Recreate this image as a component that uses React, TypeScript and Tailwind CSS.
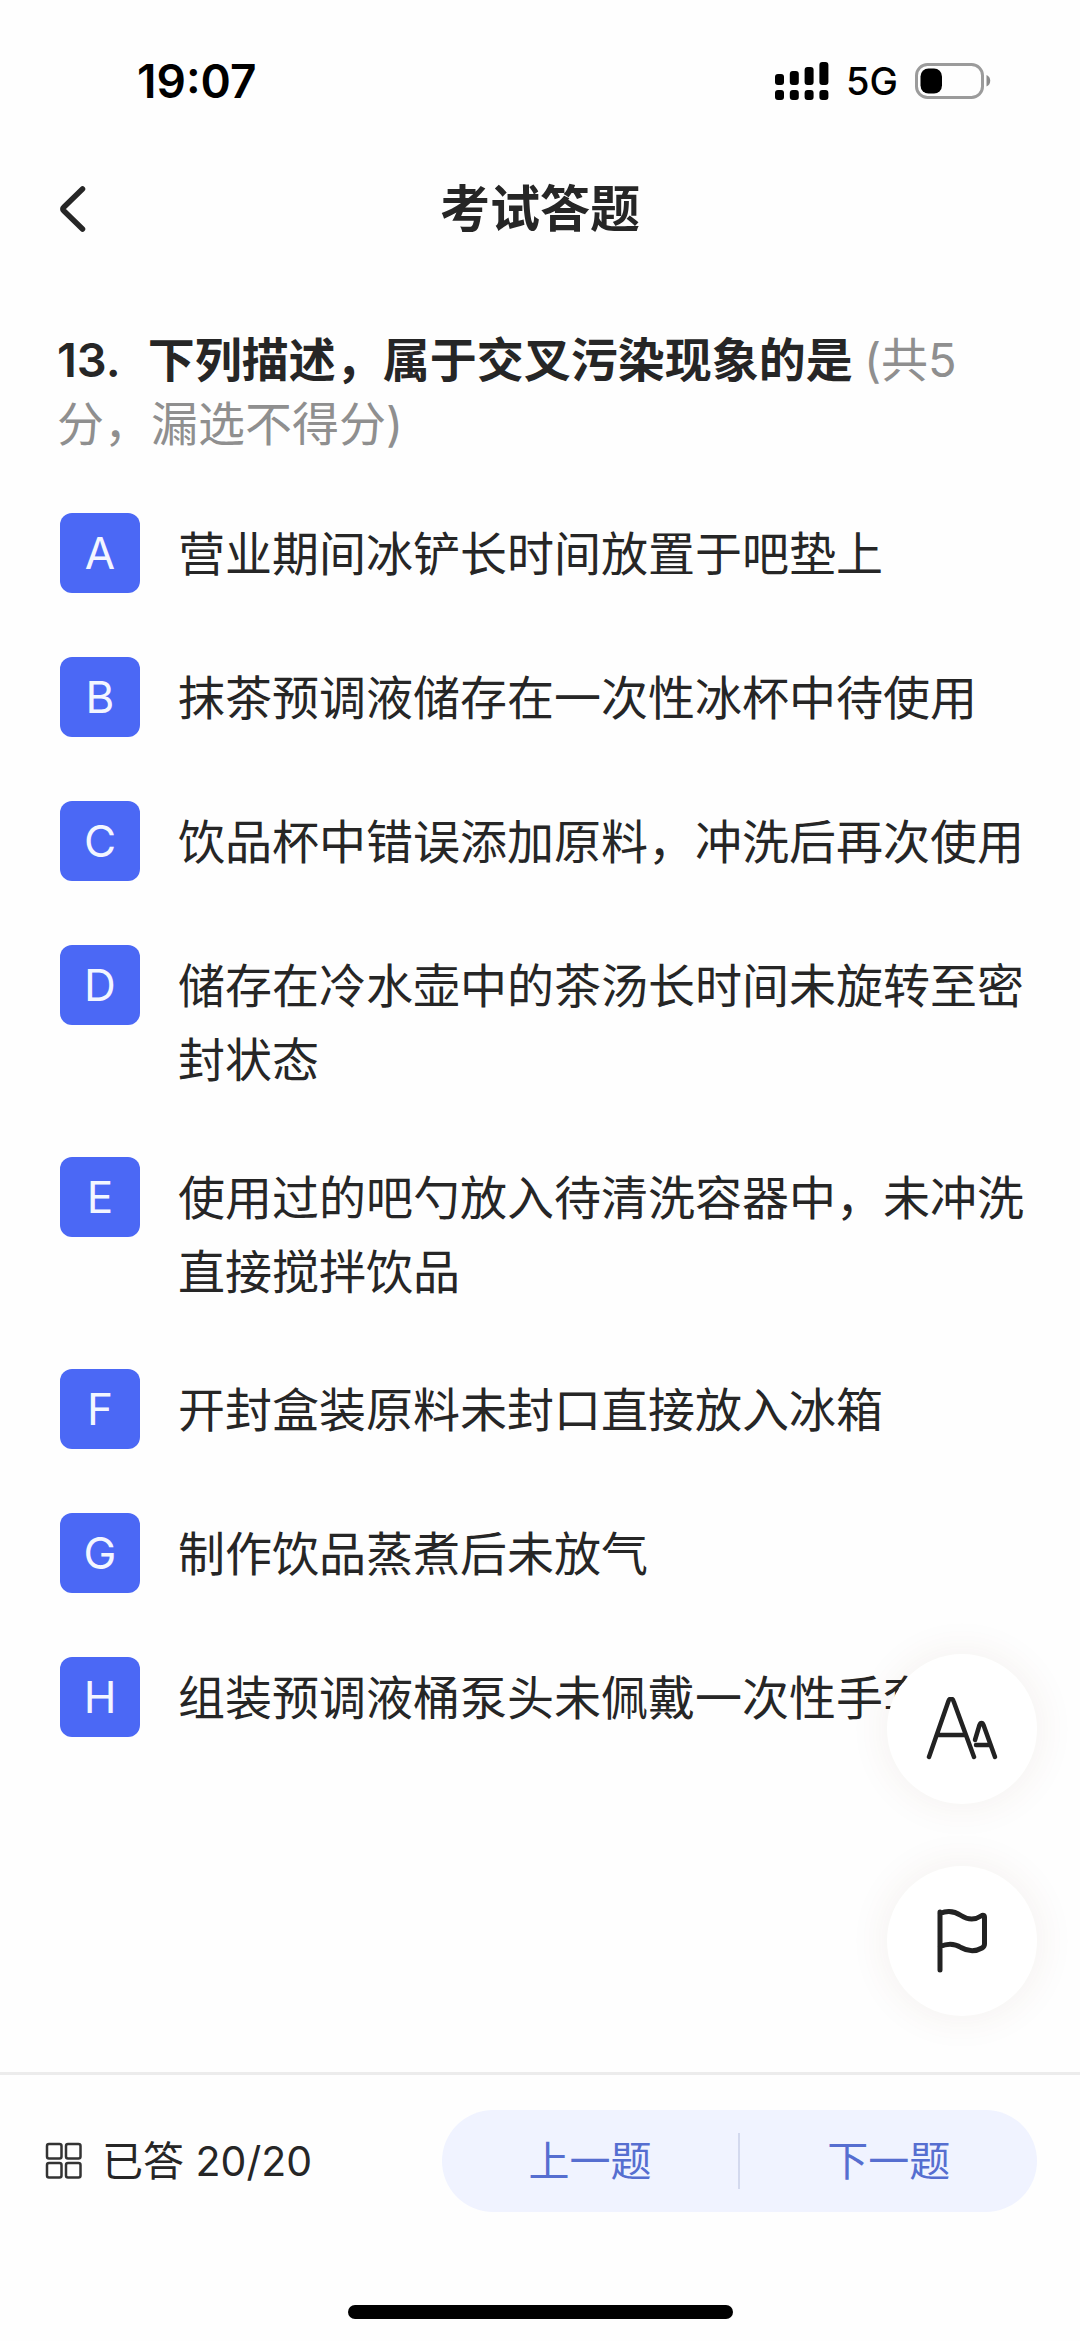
import { useState } from "react";

const options = [
  { key: "A", text: "营业期间冰铲长时间放置于吧垫上" },
  { key: "B", text: "抹茶预调液储存在一次性冰杯中待使用" },
  { key: "C", text: "饮品杯中错误添加原料，冲洗后再次使用" },
  { key: "D", text: "储存在冷水壶中的茶汤长时间未旋转至密封状态" },
  { key: "E", text: "使用过的吧勺放入待清洗容器中，未冲洗直接搅拌饮品" },
  { key: "F", text: "开封盒装原料未封口直接放入冰箱" },
  { key: "G", text: "制作饮品蒸煮后未放气" },
  { key: "H", text: "组装预调液桶泵头未佩戴一次性手套" },
];

function SignalIcon() {
  const heights = [11, 14, 18, 23];
  return (
    <svg width="54" height="38" viewBox="0 0 54 38" aria-hidden="true">
      {heights.map((h, i) => (
        <g key={i}>
          <rect x={i * 14.8} y={23 - h} width="9" height={h} rx="3" />
          <rect x={i * 14.8} y="28" width="9" height="10" rx="3" />
        </g>
      ))}
    </svg>
  );
}

function BatteryIcon() {
  return (
    <svg width="76" height="36" viewBox="0 0 76 36" aria-hidden="true">
      <rect x="1.5" y="1.5" width="66" height="33" rx="11" fill="none" stroke="#9b9b9b" strokeWidth="3" />
      <rect x="5.5" y="5.5" width="21.500" height="25" rx="8" />
      <path d="M71.5 12c5 2 5 9.500 0 11.500z" fill="#8c8c8c" />
    </svg>
  );
}

function StatusBar() {
  return (
    <div className="flex h-[162px] items-center justify-between pr-[89px] pl-[137px] text-black">
      <span className="text-[46px] leading-none font-semibold">19:07</span>
      <div className="flex items-center">
        <SignalIcon />
        <span className="ml-[17px] text-[38px] leading-none font-medium">5G</span>
        <span className="ml-[17px]">
          <BatteryIcon />
        </span>
      </div>
    </div>
  );
}

function Header() {
  return (
    <header className="grid h-[94px] grid-cols-[1fr_auto_1fr] items-center px-[57px]">
      <button type="button" aria-label="返回" className="flex justify-self-start">
        <svg width="30" height="48" viewBox="0 0 30 48" fill="none" stroke="#262626" strokeWidth="5.500" strokeLinecap="round" strokeLinejoin="round" aria-hidden="true">
          <path d="M25.500 4 6.500 22.500a2 2 0 0 0 0 3L25.500 44" />
        </svg>
      </button>
      <h1 className="text-[50px] leading-none font-bold">考试答题</h1>
    </header>
  );
}

function Options() {
  const [checked, setChecked] = useState(options.map(() => true));
  return (
    <ul className="mt-[57px] flex flex-col gap-[60px] pr-12 pl-[60px]">
      {options.map((o, i) => (
        <li key={o.key}>
          <label className="flex min-h-[84px] items-start gap-[38px]">
            <input
              type="checkbox"
              className="peer sr-only"
              checked={checked[i]}
              onChange={() => setChecked(checked.map((c, j) => (j === i ? !c : c)))}
            />
            <span className="flex size-20 shrink-0 items-center justify-center rounded-xl bg-[#a9b6f5] text-[44px] leading-none text-[#f3f6ff] peer-checked:bg-[#4b68f5]">
              {o.key}
            </span>
            <span className="flex-1 pt-1 text-[47px] leading-[74px]">{o.text}</span>
          </label>
        </li>
      ))}
    </ul>
  );
}

function FloatingActions() {
  return (
    <div className="absolute right-[43px] bottom-14 flex flex-col gap-[62px]">
      <button type="button" aria-label="字体大小" className="flex size-[150px] items-center justify-center rounded-full bg-white shadow-[0_0_40px_rgba(110,60,40,0.08)]">
        <svg width="72" height="64" viewBox="0 0 72 64" fill="none" stroke="#222" strokeWidth="4.500" strokeLinecap="round" strokeLinejoin="round" aria-hidden="true">
          <path d="M3 60 22.500 4c1-3 4-3 5 0L48 60M12 38h28" />
          <path d="m49 43 4.500-15c1-2.600 3-2.600 4 0L69 60M50 48h14" />
        </svg>
      </button>
      <button type="button" aria-label="标记" className="flex size-[150px] items-center justify-center rounded-full bg-white shadow-[0_0_40px_rgba(110,60,40,0.08)]">
        <svg width="54" height="66" viewBox="0 0 54 66" fill="none" stroke="#222" strokeWidth="5" strokeLinecap="round" strokeLinejoin="round" aria-hidden="true">
          <path d="M5 4v58M5 5.500c8-3.500 15-2 21 2 7 4.500 14 4.500 20 .5 2-1.300 3.500-.8 3.500 1.200V36c0 2-.8 3-2.500 4-7 4-14 3.500-21-.5-7-4.500-13-4.500-21-1" />
        </svg>
      </button>
    </div>
  );
}

function Footer() {
  return (
    <footer className="border-t-[3px] border-[#ececec]">
      <div className="flex items-center justify-between pt-[35px] pr-[43px] pl-[45px]">
        <button type="button" className="flex items-center gap-[19px] text-[41px] leading-none">
          <svg width="38" height="38" viewBox="0 0 38 38" fill="none" stroke="#333" strokeWidth="2.500" aria-hidden="true">
            <rect x="2" y="2" width="14.500" height="14.500" rx="2" />
            <rect x="21" y="2" width="14.500" height="14.500" rx="2" />
            <rect x="2" y="21" width="14.500" height="14.500" rx="2" />
            <rect x="21" y="21" width="14.500" height="14.500" rx="2" />
          </svg>
          <span>已答 20/20</span>
        </button>
        <div className="flex h-[102px] w-3/5 items-center rounded-full bg-[#f0f3ff] text-[41px] leading-none text-[#566ed0]">
          <button type="button" className="h-full flex-1">上一题</button>
          <span className="h-14 w-0.5 bg-[#d3d9ee]" />
          <button type="button" className="h-full flex-1">下一题</button>
        </div>
      </div>
      <div className="flex justify-center pt-[93px] pb-[22px]">
        <div className="h-[14px] w-[385px] rounded-full bg-black" />
      </div>
    </footer>
  );
}

export default function App() {
  return (
    <div className="flex min-h-screen flex-col bg-[#fefefe] font-['Inter','Noto_Sans_CJK_SC',sans-serif] text-[#262626]">
      <StatusBar />
      <Header />
      <main className="relative flex-1 pt-[72px]">
        <h2 className="px-[57px] text-[47px] leading-16 font-bold">
          <span className="mr-[27px] font-semibold">13.</span>
          下列描述，属于交叉污染现象的是{" "}
          <span className="font-normal text-[#8f8f8f]">(共5分，漏选不得分)</span>
        </h2>
        <Options />
        <FloatingActions />
      </main>
      <Footer />
    </div>
  );
}
